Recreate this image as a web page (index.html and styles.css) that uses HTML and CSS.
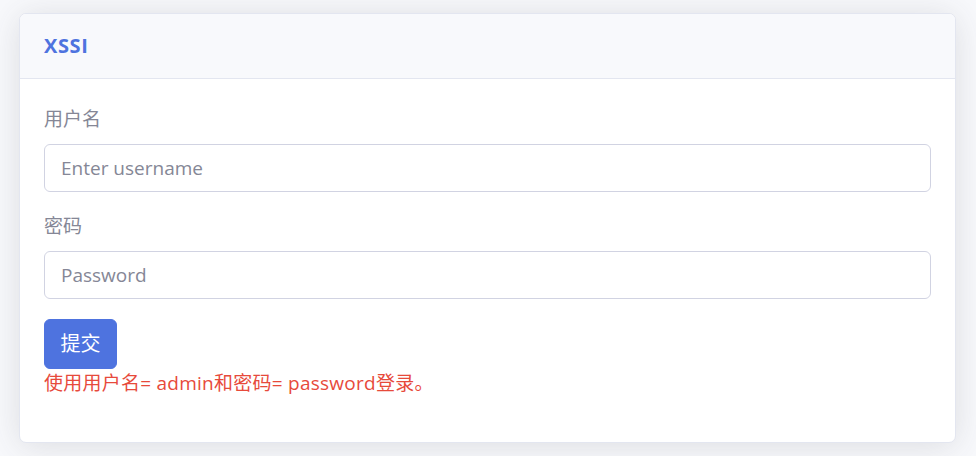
FILE: index.html
```html
<!DOCTYPE html>
<html lang="zh">
<head>
<meta charset="utf-8">
<title>XSSI</title>
<link rel="stylesheet" href="styles.css">
</head>
<body>
<div class="page">
  <div class="card">
    <div class="card-header">XSSI</div>
    <div class="card-body">
      <form class="form">
        <div class="form-group">
          <label class="label" for="username">用户名</label>
          <input class="input" id="username" type="text" placeholder="Enter username">
        </div>
        <div class="form-group">
          <label class="label" for="password">密码</label>
          <input class="input" id="password" type="password" placeholder="Password">
        </div>
        <button class="btn" type="button">提交</button>
      </form>
      <p class="hint">使用用户名= admin和密码= password登录。</p>
    </div>
  </div>
</div>
</body>
</html>
```
FILE: styles.css
```css
* { box-sizing: border-box; }
html, body {
  margin: 0;
  padding: 0;
  background: #f8f9fc;
  font-family: "Open Sans", "Noto Sans CJK SC", sans-serif;
  color: #858796;
}
.page {
  padding: 13px 20px 13px 19px;
}
.card {
  background: #fff;
  border: 1px solid #e3e6f0;
  border-radius: 7px;
  box-shadow: 0 3px 34px 0 rgba(58, 59, 69, 0.15);
  overflow: hidden;
}
.card-header {
  height: 65px;
  background: #f8f9fc;
  border-bottom: 1px solid #e3e6f0;
  display: flex;
  align-items: center;
  padding: 0 24px 1px;
  color: #4e73df;
  font-weight: 700;
  font-size: 20px;
  letter-spacing: 0.6px;
}
.card-body {
  padding: 26px 24px 45px 24px;
}
.form { margin: 0; }
.form-group {
  margin-bottom: 20px;
}
.label {
  display: block;
  font-size: 19px;
  line-height: 28px;
  margin-bottom: 11px;
  color: #858796;
}
.input {
  display: block;
  width: 100%;
  height: 48px;
  padding: 0 16px;
  border: 1px solid #d1d3e2;
  border-radius: 6px;
  font-family: inherit;
  font-size: 19px;
  color: #6e707e;
  background: #fff;
  outline: none;
}
.input::placeholder {
  color: #858796;
  opacity: 1;
}
.btn {
  display: block;
  height: 50px;
  padding: 0 15.5px;
  border: 1px solid #4e73df;
  border-radius: 6px;
  background: #4e73df;
  color: #fff;
  font-family: inherit;
  font-size: 20px;
  line-height: 28px;
}
.hint {
  margin: 0;
  font-size: 19px;
  line-height: 28px;
  letter-spacing: 0.25px;
  color: #e74a3b;
}
```
